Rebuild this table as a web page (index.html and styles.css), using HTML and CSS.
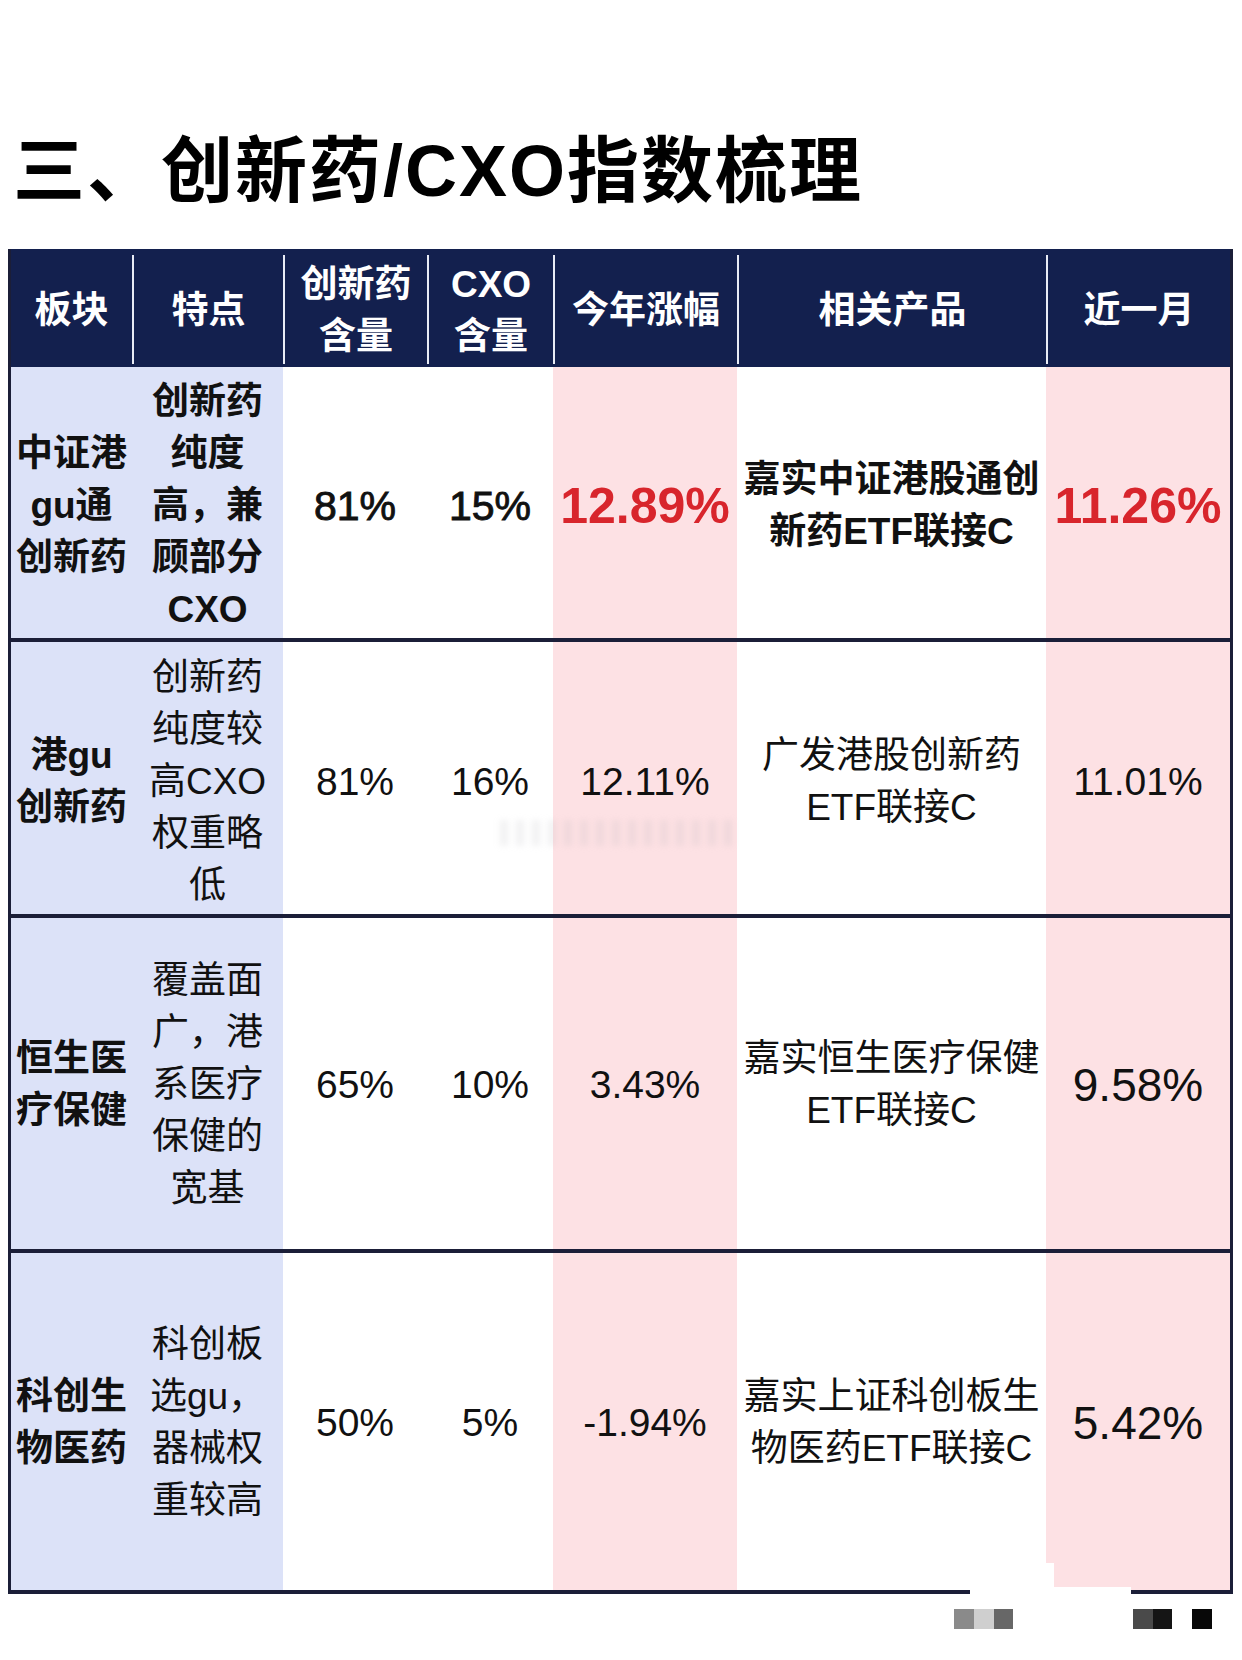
FILE: index.html
```html
<!DOCTYPE html>
<html lang="zh-CN">
<head>
<meta charset="utf-8">
<title>创新药/CXO指数梳理</title>
<link rel="stylesheet" href="styles.css">
</head>
<body>
<div class="page">
  <h1 class="title">三、创新药/CXO指数梳理</h1>
  <div class="table">
    <div class="row head">
      <div class="cell"><span>板块</span></div>
      <div class="cell"><span>特点</span></div>
      <div class="cell"><span>创新药<br>含量</span></div>
      <div class="cell"><span>CXO<br>含量</span></div>
      <div class="cell"><span>今年涨幅</span></div>
      <div class="cell"><span>相关产品</span></div>
      <div class="cell"><span>近一月</span></div>
    </div>
    <div class="row r1">
      <div class="cell blue b"><span>中证港<br>gu通<br>创新药</span></div>
      <div class="cell blue b"><span>创新药<br>纯度<br>高，兼<br>顾部分<br>CXO</span></div>
      <div class="cell num med"><span>81%</span></div>
      <div class="cell num med"><span>15%</span></div>
      <div class="cell pink big red b"><span>12.89%</span></div>
      <div class="cell b"><span>嘉实中证港股通创<br>新药ETF联接C</span></div>
      <div class="cell pink big red b"><span>11.26%</span></div>
    </div>
    <div class="row r2">
      <div class="cell blue b"><span>港gu<br>创新药</span></div>
      <div class="cell blue"><span>创新药<br>纯度较<br>高CXO<br>权重略<br>低</span></div>
      <div class="cell num"><span>81%</span></div>
      <div class="cell num"><span>16%</span></div>
      <div class="cell pink num"><span>12.11%</span></div>
      <div class="cell"><span>广发港股创新药<br>ETF联接C</span></div>
      <div class="cell pink num"><span>11.01%</span></div>
    </div>
    <div class="row r3">
      <div class="cell blue b"><span>恒生医<br>疗保健</span></div>
      <div class="cell blue"><span>覆盖面<br>广，港<br>系医疗<br>保健的<br>宽基</span></div>
      <div class="cell num"><span>65%</span></div>
      <div class="cell num"><span>10%</span></div>
      <div class="cell pink num"><span>3.43%</span></div>
      <div class="cell"><span>嘉实恒生医疗保健<br>ETF联接C</span></div>
      <div class="cell pink mid"><span>9.58%</span></div>
    </div>
    <div class="row r4">
      <div class="cell blue b"><span>科创生<br>物医药</span></div>
      <div class="cell blue"><span>科创板<br>选gu，<br>器械权<br>重较高</span></div>
      <div class="cell num"><span>50%</span></div>
      <div class="cell num"><span>5%</span></div>
      <div class="cell pink num"><span>-1.94%</span></div>
      <div class="cell"><span>嘉实上证科创板生<br>物医药ETF联接C</span></div>
      <div class="cell pink mid"><span>5.42%</span></div>
    </div>
  </div>
</div>
<div class="wm-streak"></div>
<div class="wm-patch wm-patch-a"></div>
<div class="wm-patch wm-patch-b"></div>
<div class="wm-marks">
  <i class="sq s1"></i><i class="sq s2"></i><i class="sq s3"></i>
  <i class="gap"></i>
  <i class="sq s4"></i><i class="sq s5"></i><i class="gap2"></i><i class="sq s6"></i>
</div>
</body>
</html>
```

FILE: styles.css
```css
* { box-sizing: border-box; }
html, body { margin: 0; padding: 0; background: #fff; }
body {
  width: 1242px;
  height: 1660px;
  position: relative;
  overflow: hidden;
  font-family: "Liberation Sans", "Noto Sans CJK SC", sans-serif;
  color: #111;
}
.page { padding: 0 9px 0 8px; }
.title {
  margin: 0;
  padding: 135px 0 0 5px;
  font-family: "Liberation Sans", "Noto Sans CJK SC", sans-serif;
  font-weight: 700;
  font-size: 72px;
  line-height: 72px;
  letter-spacing: 2px;
  color: #000;
}
.table {
  margin-top: 42px;
  width: 1225px;
  border-left: 3px solid #1b1e38;
  border-right: 3px solid #1b1e38;
  border-bottom: 4px solid #1b1e38;
}
.row {
  display: grid;
  grid-template-columns: 121px 151px 144px 126px 184px 309px 184px;
}
.cell {
  display: flex;
  align-items: center;
  justify-content: center;
  text-align: center;
  font-size: 37px;
  line-height: 52px;
}
.head {
  background: #13204e;
  height: 118px;
  padding: 6px 0 3px;
  color: #fff;
}
.head .cell { font-weight: 700; padding-top: 3px; }
.head .cell + .cell { border-left: 2px solid #e8ebf5; }
.r1 { height: 271px; }
.r1 .cell, .r2 .cell { padding-top: 7px; }
.r2, .r3, .r4 { border-top: 4px solid #1b1e38; }
.r2 { height: 276px; }
.r3 { height: 335px; }
.r4 { height: 341px; }
.r3 .cell, .r4 .cell { padding-top: 2px; }
.blue { background: #dce2f8; }
.pink { background: #fde1e4; }
.b { font-weight: 700; }
.num { font-size: 39px; }
.med { font-size: 41px; -webkit-text-stroke: 0.9px #111; }
.big { font-size: 50px; }
.mid { font-size: 46px; }
.red { color: #d8252c; }

.wm-streak {
  position: absolute;
  left: 500px;
  top: 820px;
  width: 240px;
  height: 26px;
  background: repeating-linear-gradient(90deg, rgba(170,170,175,0.16) 0 8px, rgba(255,255,255,0) 8px 16px);
  filter: blur(3px);
}
.wm-patch { position: absolute; background: #fff; }
.wm-patch-a { left: 970px; top: 1563px; width: 84px; height: 34px; }
.wm-patch-b { left: 1053px; top: 1587px; width: 78px; height: 10px; }
.wm-marks {
  position: absolute;
  left: 954px;
  top: 1609px;
  height: 20px;
  display: flex;
}
.wm-marks i { display: block; height: 20px; }
.sq { width: 20px; }
.s1 { background: #8a8a8a; }
.s2 { background: #cfcfcf; }
.s3 { background: #676767; width: 19px; }
.gap { width: 120px; }
.s4 { background: #4a4a4a; }
.s5 { background: #151515; width: 19px; }
.gap2 { width: 20px; }
.s6 { background: #080808; }
```
